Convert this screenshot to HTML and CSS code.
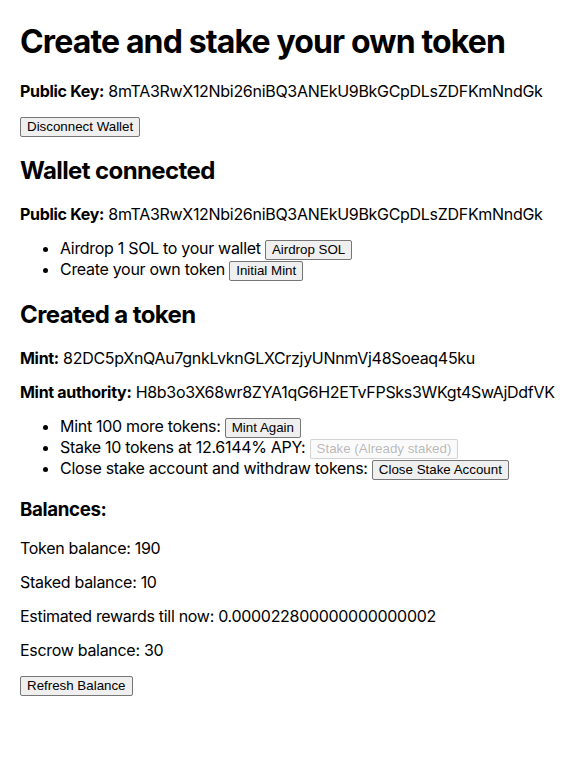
FILE: index.html
```html
<!DOCTYPE html>
<html>
<head>
<meta charset="utf-8">
<link rel="stylesheet" href="styles.css">
</head>
<body>
<div class="app">
  <h1 class="title">Create and stake your own token</h1>
  <p class="line"><strong>Public Key:</strong> 8mTA3RwX12Nbi26niBQ3ANEkU9BkGCpDLsZDFKmNndGk</p>
  <button class="btn">Disconnect Wallet</button>
  <h2 class="section">Wallet connected</h2>
  <p class="line"><strong>Public Key:</strong> 8mTA3RwX12Nbi26niBQ3ANEkU9BkGCpDLsZDFKmNndGk</p>
  <ul class="list">
    <li>Airdrop 1 SOL to your wallet <button class="btn">Airdrop SOL</button></li>
    <li>Create your own token <button class="btn">Initial Mint</button></li>
  </ul>
  <h2 class="section">Created a token</h2>
  <p class="line"><strong>Mint:</strong> 82DC5pXnQAu7gnkLvknGLXCrzjyUNnmVj48Soeaq45ku</p>
  <p class="line"><strong>Mint authority:</strong> H8b3o3X68wr8ZYA1qG6H2ETvFPSks3WKgt4SwAjDdfVK</p>
  <ul class="list">
    <li>Mint 100 more tokens: <button class="btn">Mint Again</button></li>
    <li>Stake 10 tokens at 12.6144% APY: <button class="btn" disabled>Stake (Already staked)</button></li>
    <li>Close stake account and withdraw tokens: <button class="btn">Close Stake Account</button></li>
  </ul>
  <h3 class="sub">Balances:</h3>
  <p class="line">Token balance: 190</p>
  <p class="line">Staked balance: 10</p>
  <p class="line">Estimated rewards till now: 0.000022800000000000002</p>
  <p class="line">Escrow balance: 30</p>
  <button class="btn">Refresh Balance</button>
</div>
</body>
</html>
```
FILE: styles.css
```css
html, body {
  margin: 0;
  padding: 0;
  background: #fff;
}
body {
  font-family: Inter, "Liberation Sans", Arial, sans-serif;
  font-size: 16px;
  line-height: 18px;
  letter-spacing: -0.3px;
  color: #000;
}
.app {
  padding: 0 20px;
  overflow: hidden;
}
.title {
  font-size: 32px;
  line-height: 38px;
  font-weight: 700;
  letter-spacing: -0.86px;
  margin: 23px 0 21px;
}
.section {
  font-size: 24px;
  line-height: 28px;
  font-weight: 700;
  letter-spacing: -0.6px;
  margin: 20px 0;
}
.sub {
  font-size: 18.72px;
  line-height: 22px;
  font-weight: 700;
  letter-spacing: -0.35px;
  margin: 18.72px 0;
}
.line {
  margin: 16px 0;
}
.list {
  margin: 16px 0;
  padding-left: 40px;
}
.list li {
  line-height: 18px;
}
.btn {
  font-family: "Liberation Sans", Arial, sans-serif;
  font-size: 13.333px;
  line-height: 16px;
  letter-spacing: normal;
  color: #000;
  background: #efefef;
  border: 1px solid #767676;
  border-radius: 2px;
  padding: 1px 6px;
  vertical-align: baseline;
}
.btn:disabled {
  color: rgba(16, 16, 16, 0.3);
  background: rgba(239, 239, 239, 0.3);
  border-color: rgba(118, 118, 118, 0.3);
}
```
